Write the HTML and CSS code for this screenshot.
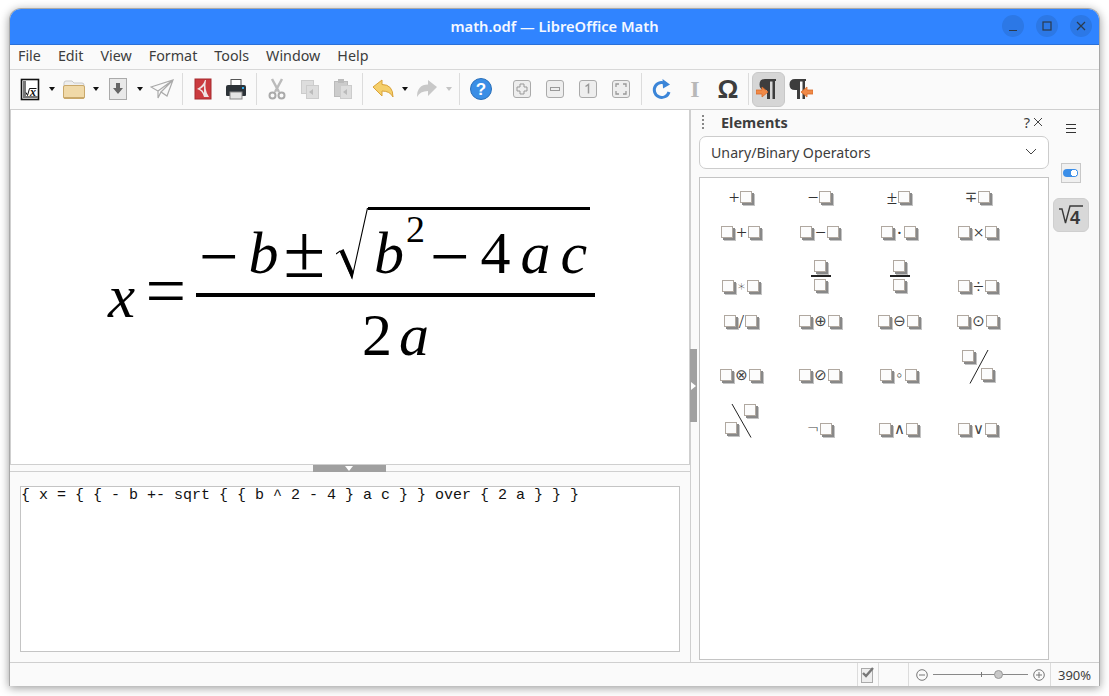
FILE: index.html
```html
<!DOCTYPE html>
<html lang="en">
<head>
  <meta charset="UTF-8">
  <title>math.odf — LibreOffice Math</title>
  <link rel="stylesheet" href="styles.css">
</head>
<body>
  <div class="window">
    <div class="titlebar">
      <div class="title">math.odf — LibreOffice Math</div>
      <div class="win-buttons">
        <div class="win-btn"><svg width="22" height="22"><path d="M7 15.500h8" stroke="#2b3a4d" stroke-width="1.200"/></svg></div>
        <div class="win-btn"><svg width="22" height="22"><rect x="7" y="7" width="8" height="8" fill="none" stroke="#2b3a4d" stroke-width="1.200"/></svg></div>
        <div class="win-btn"><svg width="22" height="22"><path d="M7 7l8 8M15 7l-8 8" stroke="#2b3a4d" stroke-width="1.200"/></svg></div>
      </div>
    </div>

    <div class="menubar">
      <span>File</span><span>Edit</span><span>View</span><span>Format</span><span>Tools</span><span>Window</span><span>Help</span>
    </div>

    <div class="toolbar">
      <div class="tb"><svg width="24" height="24"><rect x="3.500" y="2.500" width="17" height="20" fill="#fff" stroke="#111" stroke-width="1.600"/><path d="M5 21V4h3v15h12v2z" fill="#777"/><path d="M8 15.500l1.500 3 2-7h7" fill="none" stroke="#111"/><text x="12" y="19" class="ico-x">x</text></svg></div>
      <div class="caret"></div>
      <div class="tb"><svg width="24" height="24"><path d="M2 6q0-2 2-2h6l2 2h8q2 0 2 2v3H2z" fill="#eee" stroke="#c9c9c9"/><rect x="1.500" y="8.500" width="21" height="13" rx="1.500" fill="#f0d9a8" stroke="#c9a86a"/><path d="M2 20h20v1.500H2z" fill="#c9a86a"/></svg></div>
      <div class="caret"></div>
      <div class="tb"><svg width="24" height="24"><rect x="3.500" y="1.500" width="17" height="21" fill="#e9e9e9" stroke="#aaa"/><path d="M10 6h4v5h3l-5 6-5-6h3z" fill="#666"/></svg></div>
      <div class="caret"></div>
      <div class="tb"><svg width="24" height="24"><path d="M1 10L23 3 17 19 11 15 8 21V14z M8 14L23 3 11 15" fill="#fafafa" stroke="#aaa" stroke-width="1.200"/></svg></div>
      <div class="sep"></div>
      <div class="tb"><svg width="24" height="24"><rect x="4" y="2" width="16" height="20" fill="#cb3b3f" stroke="#a52a2e"/><path d="M14 3q-2 6-8 9 5 1 7 8h5q-5-7-3-17z" fill="#efe3e3"/><path d="M13 9q-2 2-4 3 3 1 4 4z" fill="#cb3b3f"/></svg></div>
      <div class="tb"><svg width="24" height="24"><rect x="7" y="2.500" width="10" height="6" fill="#fff" stroke="#555"/><path d="M4 8h16q2 0 2 2v8q0 1-1 1H3q-1 0-1-1v-8q0-2 2-2z" fill="#2d3338"/><rect x="6" y="15" width="12" height="7" fill="#e4e4e4" stroke="#888"/><rect x="18" y="10" width="2" height="2" fill="#2fa8e8"/></svg></div>
      <div class="sep"></div>
      <div class="tb"><svg width="24" height="24"><path d="M7 2l7 13M17 2l-7 13" stroke="#bbb" stroke-width="2.500"/><circle cx="7.500" cy="18.500" r="3" fill="none" stroke="#aaa" stroke-width="2"/><circle cx="16.500" cy="18.500" r="3" fill="none" stroke="#aaa" stroke-width="2"/></svg></div>
      <div class="tb"><svg width="24" height="24"><rect x="3.500" y="3.500" width="12" height="13" fill="#ddd" stroke="#ccc"/><rect x="8.500" y="8.500" width="12" height="13" fill="#ddd" stroke="#ccc"/><path d="M11 15l4-3v6z" fill="#bbb"/></svg></div>
      <div class="tb"><svg width="24" height="24"><rect x="3.500" y="4.500" width="13" height="15" fill="#ccc" stroke="#bbb"/><rect x="7" y="2" width="6" height="4" fill="#bbb"/><rect x="9.500" y="8.500" width="11" height="13" fill="#ddd" stroke="#ccc"/><path d="M12 15l4-3v6z" fill="#bbb"/></svg></div>
      <div class="sep sep-short"></div>
      <div class="tb"><svg width="24" height="24"><path d="M2 10l9-7v4.500q11 0 11 12.500-3-6-11-6V19z" fill="#f5cf6a" stroke="#d9a23a"/></svg></div>
      <div class="caret"></div>
      <div class="tb"><svg width="24" height="24"><path d="M22 10l-9-7v4.500Q2 7.500 2 20q3-6 11-6V19z" fill="#c8c8c8"/></svg></div>
      <div class="caret caret-off"></div>
      <div class="sep sep-wide"></div>
      <div class="tb tb-gap"><svg width="24" height="24"><circle cx="12" cy="12" r="10.500" fill="#3a8ee6" stroke="#2a6fb8"/><text x="12" y="18" class="ico-help">?</text></svg></div>
      <div class="tb"><svg width="24" height="24"><rect x="3.500" y="3.500" width="17" height="17" rx="2.500" fill="#eee" stroke="#aaa"/><path d="M10 7h4v3h3v4h-3v3h-4v-3H7v-4h3z" fill="#eee" stroke="#999"/></svg></div>
      <div class="tb"><svg width="24" height="24"><rect x="3.500" y="3.500" width="17" height="17" rx="2.500" fill="#eee" stroke="#aaa"/><rect x="7.500" y="10.500" width="9" height="3" fill="#eee" stroke="#999"/></svg></div>
      <div class="tb"><svg width="24" height="24"><rect x="3.500" y="3.500" width="17" height="17" rx="2.500" fill="#eee" stroke="#aaa"/><path d="M9.500 9.500l3-2v9" fill="none" stroke="#999" stroke-width="1.500"/></svg></div>
      <div class="tb"><svg width="24" height="24"><rect x="3.500" y="3.500" width="17" height="17" rx="2.500" fill="#eee" stroke="#aaa"/><path d="M7 10V7h3M14 7h3v3M17 14v3h-3M10 17H7v-3" fill="none" stroke="#999" stroke-width="1.300"/></svg></div>
      <div class="sep sep-mid"></div>
      <div class="tb"><svg width="24" height="24"><path d="M17 7.500A7.500 7.500 0 1 0 19 15" fill="none" stroke="#3b85d8" stroke-width="3"/><path d="M12.500 2l7.500 5.500-7 4z" fill="#3b85d8"/></svg></div>
      <div class="tb tb-text tb-i">I</div>
      <div class="tb tb-text tb-omega">Ω</div>
      <div class="sep sep-short"></div>
      <div class="tb tb-on"><svg width="24" height="24"><path d="M9 2h11v2h-1v18h-2.500V4.500H14V22h-3V13H9q-5.500 0-5.500-5.500T9 2z" fill="#3d3d3d"/><path d="M0 13h6v-3l6 5-6 5v-3H0z" fill="#f08a48" stroke="#d8692a" stroke-width=".8"/></svg></div>
      <div class="tb"><svg width="24" height="24"><path d="M6 2h11v2h-1v18h-2.500V4.500H11V22H8V13H6Q.5 13 .5 7.500T6 2z" fill="#3d3d3d"/><path d="M24 13h-6v-3l-6 5 6 5v-3h6z" fill="#f08a48" stroke="#d8692a" stroke-width=".8"/></svg></div>
    </div>

    <div class="main">
      <div class="doc">
        <div class="view">
          <div class="formula">
            <span class="f-x">x</span>
            <span class="f-eq">=</span>
            <div class="frac">
              <div class="num">
                <span class="f-minus">−</span>
                <span class="f-b">b</span>
                <span class="f-pm">±</span>
                <svg class="radical" width="32" height="72"><path d="M0 46l4-3 12 27L31.500 0" fill="none" stroke="#000" stroke-width="1.100"/><path d="M4 43l12 28 1.500-7-10-23z" fill="#000"/></svg>
                <div class="radicand"><span class="f-b">b</span><span class="f-sup">2</span><span class="f-minus f-minus2">−</span><span class="f-4">4</span><span class="f-a">a</span><span class="f-c">c</span></div>
              </div>
              <div class="bar"></div>
              <div class="den"><span>2</span><span class="f-a2">a</span></div>
            </div>
          </div>
        </div>
        <div class="splitter"><div class="split-handle"></div></div>
        <div class="edit">{ x = { { - b +- sqrt { { b ^ 2 - 4 } a c } } over { 2 a } } }</div>
      </div>

      <div class="deck-handle"></div>

      <div class="panel">
        <div class="panel-head">
          <span class="grip"></span>
          <span class="panel-title">Elements</span>
          <span class="panel-help">?</span>
          <svg width="10" height="10"><path d="M1 1l8 8M9 1l-8 8" stroke="#444" stroke-width="1"/></svg>
        </div>
        <div class="select">
          <span>Unary/Binary Operators</span>
          <svg width="12" height="8"><path d="M1 1l5 5 5-5" fill="none" stroke="#444" stroke-width="1"/></svg>
        </div>
        <div class="elements">
          <div class="el">+<span class="ph"></span></div>
          <div class="el">−<span class="ph"></span></div>
          <div class="el">±<span class="ph"></span></div>
          <div class="el"><span class="sym">∓</span><span class="ph"></span></div>
          <div class="el"><span class="ph"></span>+<span class="ph"></span></div>
          <div class="el"><span class="ph"></span>−<span class="ph"></span></div>
          <div class="el"><span class="ph"></span>·<span class="ph"></span></div>
          <div class="el"><span class="ph"></span>×<span class="ph"></span></div>
          <div class="el"><span class="ph"></span><span class="sym">∗</span><span class="ph"></span></div>
          <div class="el"><div class="stack"><span class="ph"></span><div class="stack-bar"></div><span class="ph"></span></div></div>
          <div class="el"><div class="stack"><span class="ph"></span><div class="stack-bar"></div><span class="ph"></span></div></div>
          <div class="el"><span class="ph"></span>÷<span class="ph"></span></div>
          <div class="el"><span class="ph"></span>/<span class="ph"></span></div>
          <div class="el"><span class="ph"></span><span class="sym">⊕</span><span class="ph"></span></div>
          <div class="el"><span class="ph"></span><span class="sym">⊖</span><span class="ph"></span></div>
          <div class="el"><span class="ph"></span><span class="sym">⊙</span><span class="ph"></span></div>
          <div class="el"><span class="ph"></span><span class="sym">⊗</span><span class="ph"></span></div>
          <div class="el"><span class="ph"></span><span class="sym">⊘</span><span class="ph"></span></div>
          <div class="el"><span class="ph"></span><span class="sym">∘</span><span class="ph"></span></div>
          <div class="el">
            <div class="diag"><span class="ph"></span><span></span><span></span><span class="ph"></span>
              <svg width="33" height="34"><path d="M26 0L8 33.500" stroke="#222"/></svg>
            </div>
          </div>
          <div class="el">
            <div class="diag"><span></span><span class="ph"></span><span class="ph"></span><span></span>
              <svg width="33" height="34"><path d="M7 0l19 33.500" stroke="#222"/></svg>
            </div>
          </div>
          <div class="el"><span class="sym">¬</span><span class="ph"></span></div>
          <div class="el"><span class="ph"></span><span class="sym">∧</span><span class="ph"></span></div>
          <div class="el"><span class="ph"></span><span class="sym">∨</span><span class="ph"></span></div>
        </div>
      </div>

      <div class="sidebar">
        <div class="hamburger"></div>
        <div class="side-prop"><span class="pill"></span></div>
        <div class="side-math"><svg width="28" height="28"><path d="M2 8h3l3.500 14L13 5h13" fill="none" stroke="#3a3a3a" stroke-width="1.400"/><text x="13" y="23" class="ico-four">4</text></svg></div>
      </div>
    </div>

    <div class="statusbar">
      <div class="st-sign"><svg width="16" height="18"><rect x="1.500" y="2.500" width="11" height="14" fill="#eee" stroke="#aaa"/><path d="M3 7l3 3 7-8" fill="none" stroke="#777" stroke-width="2.400"/></svg></div>
      <div class="st-zoom">
        <svg width="12" height="12"><circle cx="6" cy="6" r="5.300" fill="none" stroke="#777"/><path d="M3 6h6" stroke="#777"/></svg>
        <div class="slider"><span class="tick"></span><span class="thumb"></span></div>
        <svg width="12" height="12"><circle cx="6" cy="6" r="5.300" fill="none" stroke="#777"/><path d="M3 6h6M6 3v6" stroke="#777"/></svg>
      </div>
      <div class="st-pct">390%</div>
    </div>
  </div>
</body>
</html>
```

FILE: styles.css
```css
* {
  box-sizing: border-box;
}

body {
  margin: 0;
  height: 696px;
  overflow: hidden;
  background-color: #ffffff;
  font-family: "Noto Sans", sans-serif;
  color: #3d3d3d;
}

.window {
  margin: 8px 0 0 9px;
  width: 1091px;
  height: 678px;
  display: flex;
  flex-direction: column;
  background-color: #fafafa;
  border: 1px solid #a8a8a8;
  border-bottom: none;
  border-radius: 12px 12px 0 0;
  box-shadow: 0 2px 10px rgba(0, 0, 0, 0.4);
  overflow: hidden;
}

.titlebar {
  position: relative;
  flex: none;
  height: 36px;
  display: flex;
  align-items: center;
  justify-content: center;
  padding-bottom: 2px;
  background-color: #3084ff;
  border-bottom: 1px solid #2a70d8;
}

.title {
  font-size: 14.700px;
  font-weight: 600;
  color: #f4f8ff;
}

.win-buttons {
  position: absolute;
  right: 7px;
  top: 6px;
  display: flex;
  gap: 12px;
}

.win-btn {
  width: 22px;
  height: 22px;
  border-radius: 50%;
  background-color: #2c78e6;
}

.win-btn svg {
  display: block;
}

.menubar {
  flex: none;
  height: 25px;
  display: flex;
  align-items: center;
  gap: 17px;
  padding: 0 0 3px 8px;
  font-size: 14.300px;
  border-bottom: 1px solid #d8d8d8;
}

.toolbar {
  flex: none;
  height: 40px;
  display: flex;
  align-items: center;
  padding: 0 0 1px 3px;
  border-bottom: 1px solid #cfcfcf;
}

.tb {
  flex: none;
  width: 33px;
  height: 35px;
  display: flex;
  align-items: center;
  justify-content: center;
}

.tb-gap {
  margin-right: 8px;
}

.tb-on {
  background-color: #d6d6d6;
  border: 1px solid #c8c8c8;
  border-radius: 6px;
}

.tb-text {
  font-family: "Liberation Sans", sans-serif;
}

.tb-i {
  font-family: "Liberation Serif", serif;
  font-size: 24px;
  font-weight: bold;
  color: #b8b8b8;
}

.tb-omega {
  font-size: 26px;
  font-weight: bold;
  color: #3d3d3d;
}

.caret {
  flex: none;
  width: 11px;
  display: flex;
  justify-content: center;
}

.caret::after {
  content: "";
  border-left: 3.500px solid transparent;
  border-right: 3.500px solid transparent;
  border-top: 4px solid #111;
}

.caret-off::after {
  border-top-color: #c4c4c4;
}

.sep {
  flex: none;
  width: 8px;
  height: 32px;
  background: linear-gradient(#dcdcdc, #dcdcdc) center / 1px 100% no-repeat;
}

.sep-short {
  width: 7px;
}

.sep-mid {
  width: 8.500px;
}

.sep-wide {
  width: 10px;
}

.ico-x {
  font: italic bold 12px "Liberation Serif", serif;
  fill: #111;
}

.ico-help {
  font: bold 17px "Liberation Sans", sans-serif;
  fill: #fff;
  text-anchor: middle;
}

.ico-four {
  font: bold 18px "Liberation Sans", sans-serif;
  fill: #3a3a3a;
}

.main {
  flex: 1;
  min-height: 0;
  display: flex;
  position: relative;
}

.doc {
  flex: none;
  width: 681px;
  display: flex;
  flex-direction: column;
  border-right: 1px solid #cfcfcf;
}

.view {
  flex: none;
  height: 355px;
  display: flex;
  align-items: center;
  justify-content: center;
  padding: 0 0 3px 3px;
  background-color: #ffffff;
  border: 1px solid #cfcfcf;
  border-top: none;
  color: #000;
}

.formula {
  display: flex;
  align-items: center;
  font-family: "Liberation Serif", serif;
  font-size: 60px;
  line-height: 60px;
}

.f-x {
  font-style: italic;
  font-size: 61px;
  margin-top: 22px;
}

.f-eq {
  margin: 10px 10px 0 10.500px;
  font-size: 72px;
}

.frac {
  width: 399px;
  display: flex;
  flex-direction: column;
}

.num {
  display: flex;
  align-items: baseline;
  padding-left: 3px;
  white-space: nowrap;
}

.f-minus,
.f-pm {
  display: inline-block;
  font-size: 70px;
  transform: translateY(7px);
}

.f-pm {
  font-size: 76px;
  transform: translateY(4px);
  margin-left: 5px;
}

.f-b,
.f-a,
.f-c,
.f-a2 {
  font-style: italic;
}

.f-b {
  margin-left: 10px;
}

.radical {
  align-self: flex-end;
  margin: 0 0 3px 10.700px;
}

.radicand {
  padding: 10px 3px 0 0;
  border-top: 3px solid #000;
  white-space: nowrap;
}

.radicand .f-b {
  margin-left: 6px;
}

.f-sup {
  font-size: 38px;
  line-height: 0;
  vertical-align: 31px;
  margin-left: 2px;
}

.f-minus2 {
  margin-left: 5px;
}

.f-4 {
  margin-left: 11px;
}

.f-a {
  margin-left: 10px;
}

.f-c {
  margin-left: 10px;
}

.bar {
  height: 4px;
  margin-top: 10px;
  background-color: #000;
}

.den {
  margin-top: 8px;
  text-align: center;
}

.f-a2 {
  margin-left: 7px;
}

.splitter {
  position: relative;
  flex: none;
  height: 7px;
  border-bottom: 1px solid #cfcfcf;
}

.split-handle {
  position: absolute;
  left: 303px;
  top: 0;
  width: 73px;
  height: 7px;
  background-color: #a0a0a0;
}

.split-handle::after {
  content: "";
  position: absolute;
  left: 32px;
  top: 1px;
  border-left: 4px solid transparent;
  border-right: 4px solid transparent;
  border-top: 5px solid #fff;
}

.edit {
  flex: none;
  height: 166px;
  margin: 14px 10px 0;
  background-color: #ffffff;
  border: 1px solid #c4c4c4;
  font-family: "Liberation Mono", monospace;
  font-size: 15px;
  line-height: 17px;
  color: #111;
  white-space: pre;
}

.deck-handle {
  position: absolute;
  left: 680px;
  top: 239px;
  width: 7px;
  height: 73px;
  background-color: #a0a0a0;
}

.deck-handle::after {
  content: "";
  position: absolute;
  left: 1px;
  top: 33px;
  border-top: 4px solid transparent;
  border-bottom: 4px solid transparent;
  border-left: 5px solid #fff;
}

.panel {
  flex: none;
  width: 361px;
  display: flex;
  flex-direction: column;
  padding: 0 3px 2px 8px;
}

.panel-head {
  height: 26px;
  display: flex;
  align-items: center;
  gap: 2px;
  padding: 0 6px 2px 3px;
  font-size: 14.500px;
}

.grip {
  width: 2px;
  height: 14px;
  margin-right: 15px;
  background: repeating-linear-gradient(#888 0 2px, transparent 2px 4px);
}

.panel-title {
  flex: 1;
  font-weight: bold;
}

.panel-help {
  margin-right: 1px;
}

.select {
  flex: none;
  height: 33px;
  display: flex;
  align-items: center;
  justify-content: space-between;
  padding: 0 11px 1px;
  font-size: 14.200px;
  background-color: #ffffff;
  border: 1px solid #cccccc;
  border-radius: 7px;
}

.elements {
  flex: 1;
  margin-top: 8px;
  display: grid;
  grid-template-columns: repeat(4, 79px);
  grid-template-rows: 29px 35px 54px 35px 54px 54px;
  align-content: start;
  padding-left: 2px;
  background-color: #ffffff;
  border: 1px solid #c4c4c4;
}

.el {
  display: flex;
  align-items: flex-end;
  justify-content: center;
  gap: 1px;
  padding-bottom: 2px;
  font-family: "Liberation Serif", "DejaVu Sans", serif;
  font-size: 19px;
  line-height: 15px;
  color: #333;
}

.sym {
  font-family: "DejaVu Sans Light", "DejaVu Sans", sans-serif;
  font-size: 15px;
  color: #444;
}

.ph {
  flex: none;
  display: block;
  width: 12px;
  height: 12px;
  margin: 0 2px 2px 0;
  background-color: #fcfcfc;
  border: 1px solid #b0a8a0;
  box-shadow: 2px 2px 0 #888888, 3px 3px 0 #c4c4c4;
}

.stack {
  display: flex;
  flex-direction: column;
  align-items: center;
}

.stack .ph {
  margin: 0 2px 3px 0;
}

.stack-bar {
  width: 20px;
  height: 2px;
  margin: 0 0 2px;
  background-color: #222;
}

.diag {
  position: relative;
  width: 33px;
  height: 33px;
  display: grid;
  grid-template-columns: 14px 14px;
  grid-template-rows: 18px 15px;
  justify-content: space-between;
}

.diag svg {
  position: absolute;
  left: 0;
  top: 0;
}

.sidebar {
  flex: 1;
  display: flex;
  flex-direction: column;
  align-items: center;
  padding: 14px 10px 0 0;
}

.hamburger {
  width: 10px;
  height: 9px;
  border-top: 1px solid #333;
  border-bottom: 1px solid #333;
  background: linear-gradient(#333, #333) center / 100% 1px no-repeat;
}

.side-prop {
  width: 20px;
  height: 20px;
  margin-top: 30px;
  display: flex;
  align-items: center;
  justify-content: center;
  background-color: #f0f0f0;
  border: 1px solid #c8c8c8;
}

.pill {
  width: 15px;
  height: 8px;
  border-radius: 4px;
  background: radial-gradient(circle at 11px 4px, #fff 3px, #3b8ee8 3.500px);
}

.side-math {
  width: 36px;
  height: 34px;
  margin-top: 15px;
  display: flex;
  align-items: center;
  justify-content: center;
  background-color: #d8d8d8;
  border: 1px solid #cfcfcf;
  border-radius: 6px;
}

.statusbar {
  flex: none;
  height: 24px;
  display: flex;
  align-items: center;
  justify-content: flex-end;
  font-size: 13px;
  border-top: 1px solid #cfcfcf;
}

.st-sign {
  width: 22px;
  height: 100%;
  margin-right: 29px;
  display: flex;
  align-items: center;
  justify-content: center;
  border-left: 1px solid #dcdcdc;
  border-right: 1px solid #dcdcdc;
}

.st-zoom {
  width: 143px;
  height: 100%;
  display: flex;
  align-items: center;
  gap: 5px;
  padding: 0 5px 0 7px;
  border-left: 1px solid #dcdcdc;
  border-right: 1px solid #dcdcdc;
}

.slider {
  position: relative;
  flex: 1;
  height: 1px;
  background-color: #888;
}

.tick {
  position: absolute;
  left: 48px;
  top: -2px;
  width: 1px;
  height: 5px;
  background-color: #777;
}

.thumb {
  position: absolute;
  left: 61px;
  top: -4px;
  width: 9px;
  height: 9px;
  border-radius: 50%;
  background-color: #c8c8c8;
  border: 1px solid #999;
}

.st-pct {
  width: 48px;
  padding-left: 7px;
}
```
